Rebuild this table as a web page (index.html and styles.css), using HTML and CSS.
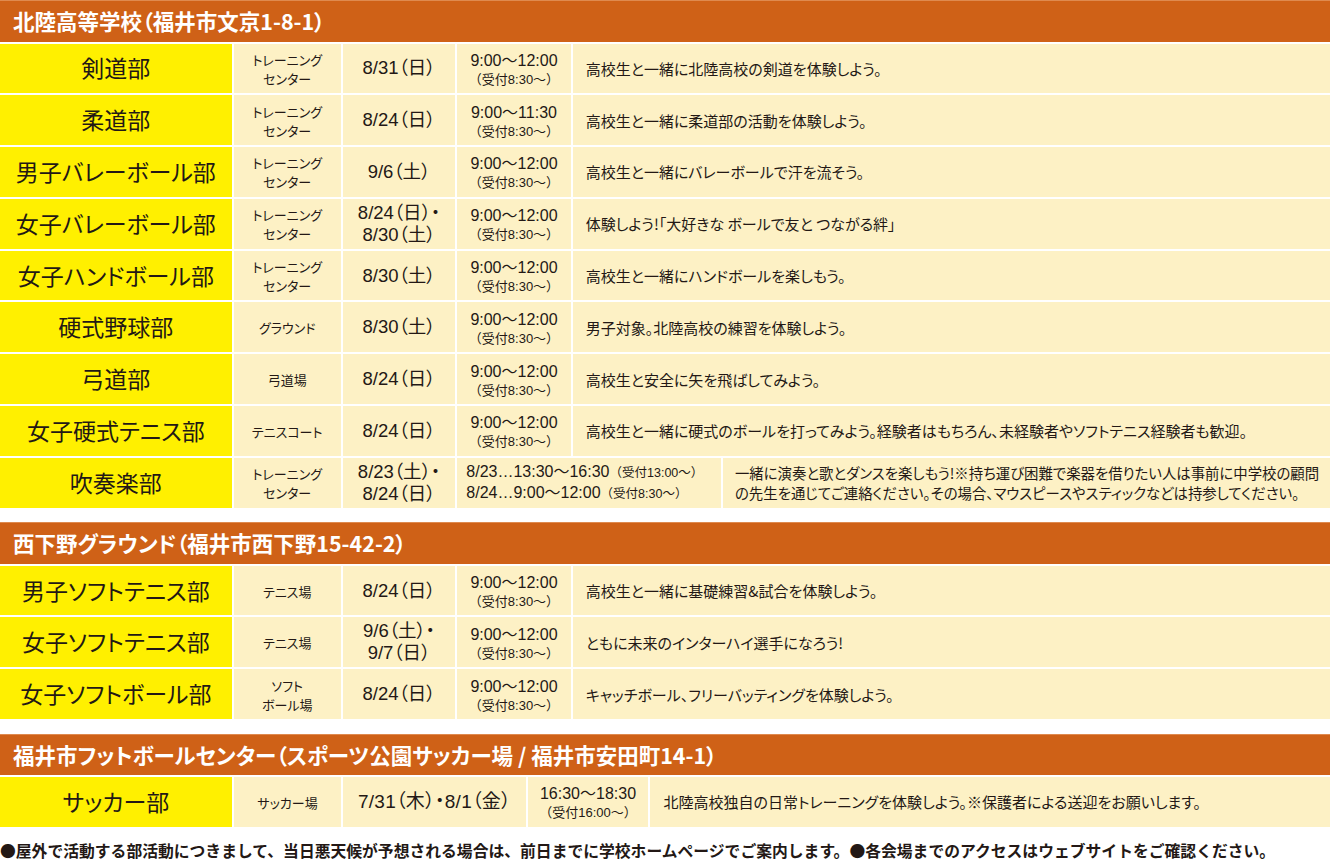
FILE: index.html
```html
<!DOCTYPE html>
<html lang="ja">
<head>
<meta charset="utf-8">
<title>部活動体験</title>
<link rel="stylesheet" href="styles.css">
</head>
<body>
<div class="page">
  <section class="venue">
    <h2 class="venue-title">北陸高等学校（福井市文京1-8-1）</h2>
    <div class="rows">
      <div class="row">
        <div class="club">剣道部</div>
        <div class="place">トレーニング<br>センター</div>
        <div class="date">8/31（日）</div>
        <div class="time"><span class="t-main">9:00〜12:00</span><span class="t-sub">（受付8:30〜）</span></div>
        <div class="desc">高校生と一緒に北陸高校の剣道を体験しよう。</div>
      </div>
      <div class="row">
        <div class="club">柔道部</div>
        <div class="place">トレーニング<br>センター</div>
        <div class="date">8/24（日）</div>
        <div class="time"><span class="t-main">9:00〜11:30</span><span class="t-sub">（受付8:30〜）</span></div>
        <div class="desc">高校生と一緒に柔道部の活動を体験しよう。</div>
      </div>
      <div class="row">
        <div class="club">男子バレーボール部</div>
        <div class="place">トレーニング<br>センター</div>
        <div class="date">9/6（土）</div>
        <div class="time"><span class="t-main">9:00〜12:00</span><span class="t-sub">（受付8:30〜）</span></div>
        <div class="desc">高校生と一緒にバレーボールで汗を流そう。</div>
      </div>
      <div class="row">
        <div class="club">女子バレーボール部</div>
        <div class="place">トレーニング<br>センター</div>
        <div class="date"><span class="d-line">8/24（日）・</span><span class="d-line">8/30（土）</span></div>
        <div class="time"><span class="t-main">9:00〜12:00</span><span class="t-sub">（受付8:30〜）</span></div>
        <div class="desc">体験しよう!「大好きな ボールで友と つながる絆」</div>
      </div>
      <div class="row">
        <div class="club">女子ハンドボール部</div>
        <div class="place">トレーニング<br>センター</div>
        <div class="date">8/30（土）</div>
        <div class="time"><span class="t-main">9:00〜12:00</span><span class="t-sub">（受付8:30〜）</span></div>
        <div class="desc">高校生と一緒にハンドボールを楽しもう。</div>
      </div>
      <div class="row">
        <div class="club">硬式野球部</div>
        <div class="place">グラウンド</div>
        <div class="date">8/30（土）</div>
        <div class="time"><span class="t-main">9:00〜12:00</span><span class="t-sub">（受付8:30〜）</span></div>
        <div class="desc">男子対象。北陸高校の練習を体験しよう。</div>
      </div>
      <div class="row">
        <div class="club">弓道部</div>
        <div class="place">弓道場</div>
        <div class="date">8/24（日）</div>
        <div class="time"><span class="t-main">9:00〜12:00</span><span class="t-sub">（受付8:30〜）</span></div>
        <div class="desc">高校生と安全に矢を飛ばしてみよう。</div>
      </div>
      <div class="row">
        <div class="club">女子硬式テニス部</div>
        <div class="place">テニスコート</div>
        <div class="date">8/24（日）</div>
        <div class="time"><span class="t-main">9:00〜12:00</span><span class="t-sub">（受付8:30〜）</span></div>
        <div class="desc">高校生と一緒に硬式のボールを打ってみよう。経験者はもちろん、未経験者やソフトテニス経験者も歓迎。</div>
      </div>
      <div class="row row-band">
        <div class="club">吹奏楽部</div>
        <div class="place">トレーニング<br>センター</div>
        <div class="date"><span class="d-line">8/23（土）・</span><span class="d-line">8/24（日）</span></div>
        <div class="time time-left">
          <span class="t-line">8/23…13:30〜16:30<small>（受付13:00〜）</small></span>
          <span class="t-line">8/24…9:00〜12:00<small>（受付8:30〜）</small></span>
        </div>
        <div class="desc desc-2">一緒に演奏と歌とダンスを楽しもう!※持ち運び困難で楽器を借りたい人は事前に中学校の顧問<br>の先生を通じてご連絡ください。その場合、マウスピースやスティックなどは持参してください。</div>
      </div>
    </div>
  </section>

  <section class="venue">
    <h2 class="venue-title">西下野グラウンド（福井市西下野15-42-2）</h2>
    <div class="rows">
      <div class="row">
        <div class="club">男子ソフトテニス部</div>
        <div class="place">テニス場</div>
        <div class="date">8/24（日）</div>
        <div class="time"><span class="t-main">9:00〜12:00</span><span class="t-sub">（受付8:30〜）</span></div>
        <div class="desc">高校生と一緒に基礎練習&amp;試合を体験しよう。</div>
      </div>
      <div class="row">
        <div class="club">女子ソフトテニス部</div>
        <div class="place">テニス場</div>
        <div class="date"><span class="d-line">9/6（土）・</span><span class="d-line">9/7（日）</span></div>
        <div class="time"><span class="t-main">9:00〜12:00</span><span class="t-sub">（受付8:30〜）</span></div>
        <div class="desc">ともに未来のインターハイ選手になろう!</div>
      </div>
      <div class="row">
        <div class="club">女子ソフトボール部</div>
        <div class="place">ソフト<br>ボール場</div>
        <div class="date">8/24（日）</div>
        <div class="time"><span class="t-main">9:00〜12:00</span><span class="t-sub">（受付8:30〜）</span></div>
        <div class="desc">キャッチボール、フリーバッティングを体験しよう。</div>
      </div>
    </div>
  </section>

  <section class="venue">
    <h2 class="venue-title">福井市フットボールセンター（スポーツ公園サッカー場 / 福井市安田町14-1）</h2>
    <div class="rows">
      <div class="row row-soccer">
        <div class="club">サッカー部</div>
        <div class="place">サッカー場</div>
        <div class="date date-wide">7/31（木）・8/1（金）</div>
        <div class="time"><span class="t-main">16:30〜18:30</span><span class="t-sub">（受付16:00〜）</span></div>
        <div class="desc">北陸高校独自の日常トレーニングを体験しよう。※保護者による送迎をお願いします。</div>
      </div>
    </div>
  </section>

  <p class="note">●屋外で活動する部活動につきまして、当日悪天候が予想される場合は、前日までに学校ホームページでご案内します。●各会場までのアクセスはウェブサイトをご確認ください。</p>
</div>
</body>
</html>
```

FILE: styles.css
```css
html, body {
  margin: 0;
  padding: 0;
  background: #ffffff;
}

body {
  font-family: "Noto Sans CJK JP", "Noto Sans", sans-serif;
  color: #231815;
}

.page {
  width: 1330px;
}

.venue + .venue {
  margin-top: 14.5px;
}

.venue-title {
  margin: 0;
  height: 41.5px;
  box-sizing: border-box;
  background: #cf6117;
  border-top: 1px solid #df8a4f;
  color: #ffffff;
  font-size: 21.5px;
  font-weight: 700;
  line-height: 39px;
  padding-left: 13px;
  font-feature-settings: "palt";
  white-space: nowrap;
}

.rows {
  display: flex;
  flex-direction: column;
  gap: 2px;
  margin-top: 2px;
}

.row {
  display: grid;
  grid-template-columns: 231.7px 107px 112.6px 113.4px 1fr;
  column-gap: 2px;
  height: 49.8px;
}

.row-band {
  grid-template-columns: 231.7px 107px 112.6px 263.7px 1fr;
}

.row-soccer {
  grid-template-columns: 231.7px 107px 182.3px 120.3px 1fr;
  column-gap: 2.3px;
}

.row > div {
  background: #fdf1c5;
  display: flex;
  flex-direction: column;
  align-items: center;
  justify-content: center;
  text-align: center;
  white-space: nowrap;
}

.row > .club {
  background: #fff000;
  font-size: 23px;
  font-feature-settings: "palt";
  padding-bottom: 2px;
}

.place {
  font-size: 13px;
  line-height: 19px;
  font-feature-settings: "palt";
  padding-top: 1px;
}

.date {
  font-family: "Liberation Sans", "Noto Sans CJK JP", sans-serif;
  font-size: 18.5px;
  line-height: 22px;
  font-feature-settings: "palt";
}

.d-line {
  display: block;
  height: 22px;
  line-height: 22px;
}

.date-wide {
  font-size: 19px;
  letter-spacing: 0.3px;
}

.row > .time {
  font-family: "Liberation Sans", "Noto Sans CJK JP", sans-serif;
  line-height: 19px;
  padding-top: 3px;
}

.t-main {
  font-size: 16px;
}

.t-sub {
  font-size: 13px;
}

.row > .time-left {
  align-items: flex-start;
  text-align: left;
  padding-left: 9px;
  padding-top: 1px;
}

.t-line {
  display: block;
  font-size: 16px;
  line-height: 19.5px;
}

.t-line small {
  font-size: 12.5px;
}

.row > .desc {
  align-items: flex-start;
  text-align: left;
  padding-left: 13px;
  font-size: 15px;
  font-feature-settings: "palt";
}

.row > .desc-2 {
  padding-left: 12px;
  font-size: 14.4px;
  line-height: 19.5px;
}

.note {
  margin: 14px 0 0;
  font-size: 15.8px;
  line-height: 20px;
  font-weight: 700;
  white-space: nowrap;
}
```
